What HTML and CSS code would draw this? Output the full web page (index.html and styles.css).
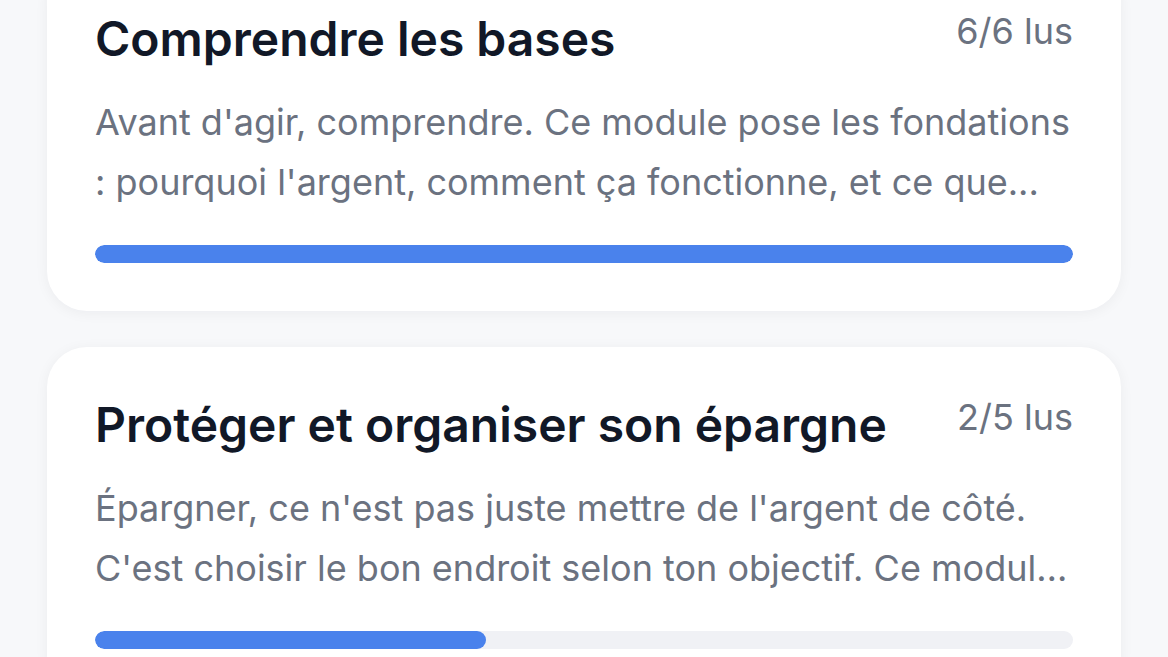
FILE: index.html
```html
<!DOCTYPE html>
<html lang="fr">
<head>
    <meta charset="utf-8">
    <title>Modules</title>
    <link rel="stylesheet" href="styles.css">
</head>
<body>
    <div class="module-list">
        <div class="module-card">
            <div class="module-head">
                <h2 class="module-title">Comprendre les bases</h2>
                <span class="module-count">6/6 lus</span>
            </div>
            <p class="module-desc">Avant d'agir, comprendre. Ce module pose les fondations : pourquoi l'argent, comment ça fonctionne, et ce que...</p>
            <div class="progress">
                <div class="progress-fill" style="width: 100%"></div>
            </div>
        </div>

        <div class="module-card">
            <div class="module-head">
                <h2 class="module-title">Protéger et organiser son épargne</h2>
                <span class="module-count">2/5 lus</span>
            </div>
            <p class="module-desc">Épargner, ce n'est pas juste mettre de l'argent de côté. C'est choisir le bon endroit selon ton objectif. Ce module t'aide à t'organiser simplement.</p>
            <div class="progress">
                <div class="progress-fill" style="width: 40%"></div>
            </div>
        </div>
    </div>
</body>
</html>
```

FILE: styles.css
```css
body {
    margin: 0;
    background: #f7f8fa;
    font-family: Inter, "Noto Sans", sans-serif;
    overflow: hidden;
}

.module-list {
    display: flex;
    flex-direction: column;
    gap: 36px;
    padding: 0 47px;
    margin-top: -39px;
}

.module-card {
    background: #ffffff;
    border-radius: 40px;
    padding: 48px;
    box-shadow: 0 2px 14px rgba(17, 24, 39, 0.05);
}

.module-head {
    display: flex;
    justify-content: space-between;
    align-items: flex-start;
    gap: 24px;
}

.module-title {
    margin: 0;
    font-size: 48px;
    line-height: 60px;
    font-weight: 600;
    color: #111827;
}

.module-count {
    font-size: 36px;
    line-height: 44px;
    color: #6b7280;
    white-space: nowrap;
}

.module-desc {
    margin: 23px 0 0;
    font-size: 36px;
    line-height: 60px;
    color: #6b7280;
    display: -webkit-box;
    -webkit-line-clamp: 2;
    -webkit-box-orient: vertical;
    overflow: hidden;
}

.progress {
    margin-top: 33px;
    height: 18px;
    border-radius: 9px;
    background: #f0f1f5;
    overflow: hidden;
}

.progress-fill {
    height: 100%;
    border-radius: 9px;
    background: #4a82ec;
}
```
